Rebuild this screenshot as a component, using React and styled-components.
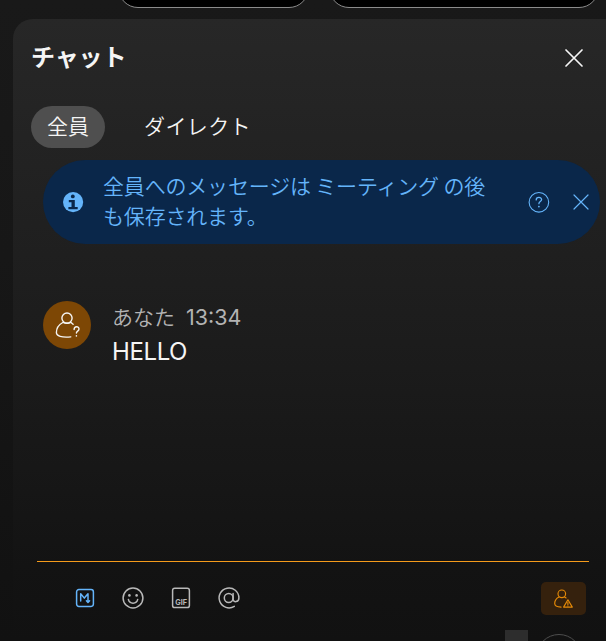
import React from 'react';
import styled, { createGlobalStyle } from 'styled-components';

const GlobalStyle = createGlobalStyle`
  * { box-sizing: border-box; }
  html, body { margin: 0; background: #141414; overflow: hidden; }
  button { appearance: none; border: 0; padding: 0; background: none; font: inherit; color: inherit; }
`;

const Screen = styled.main`
  position: relative;
  display: flex;
  flex-direction: column;
  width: 606px;
  height: 641px;
  overflow: hidden;
  background: linear-gradient(#191919, #171717 40%, #111111);
  font-family: Inter, 'Noto Sans CJK JP', sans-serif;
  color: #f5f5f5;
`;

const TopStrip = styled.div`
  display: flex;
  flex: 0 0 19px;
  align-items: flex-start;
  gap: 20px;
  padding-left: 118px;
`;

const TopPill = styled.div`
  flex: 0 0 ${({ $width }) => $width}px;
  height: 40px;
  margin-top: -32px;
  border: 1px solid #8b8b8b;
  border-radius: 20px;
  background: #000;
`;

const Panel = styled.section`
  display: flex;
  flex-direction: column;
  flex: 1;
  margin-left: 13px;
  border-radius: 20px 0 0 0;
  background: linear-gradient(#272727, #1c1c1c 52%, #131313 88%, #111111);
`;

const Header = styled.header`
  display: flex;
  align-items: center;
  justify-content: space-between;
  height: 78px;
  padding: 0 22px 0 18px;
`;

const Title = styled.h1`
  margin: -5px 0 0;
  font: 700 24px/32px 'Noto Sans CJK JP', sans-serif;
  letter-spacing: -0.1px;
`;

const IconButton = styled.button`
  display: grid;
  place-items: center;
  flex: 0 0 ${({ $size = 20 }) => $size}px;
  height: ${({ $size = 20 }) => $size}px;
  color: ${({ $color = '#f5f5f5' }) => $color};
`;

const Tabs = styled.nav`
  display: flex;
  margin-top: 9px;
  padding-left: 18px;
  gap: 22px;
`;

const Tab = styled.button`
  height: 42px;
  padding: 0 ${({ $active }) => ($active ? 0 : 17)}px 4px;
  width: ${({ $active }) => ($active ? '74px' : 'auto')};
  border-radius: 21px;
  background: ${({ $active }) => ($active ? '#4f4f4f' : 'transparent')};
  font: 350 21px/38px 'Noto Sans CJK JP', sans-serif;
  letter-spacing: ${({ $active }) => ($active ? 0 : 0.4)}px;
`;

const Banner = styled.aside`
  display: flex;
  align-items: center;
  height: 84px;
  margin: 12px 6px 0 30px;
  padding: 0 8px 0 20px;
  border-radius: 42px;
  background: #0a274a;
  color: #64b4fa;
`;

const BannerText = styled.p`
  width: 405px;
  margin: -4px 20px 0 19px;
  font: 350 21px/30px 'Noto Sans CJK JP', sans-serif;
  letter-spacing: -0.18px;
  white-space: nowrap;
`;

const BannerActions = styled.div`
  display: flex;
  gap: 21px;
`;

const Message = styled.article`
  display: flex;
  margin: 57px 0 0 30px;
  gap: 21px;
`;

const Avatar = styled.div`
  display: grid;
  place-items: center;
  width: 48px;
  height: 48px;
  padding-left: 1px;
  border-radius: 50%;
  background: #7d4705;
`;

const MessageMeta = styled.div`
  display: flex;
  gap: 11px;
  height: 33px;
  color: #b3b3b3;
  font-size: 21px;
  line-height: 33px;
`;

const Sender = styled.span`
  margin-top: -1px;
  font-family: 'Noto Sans CJK JP', sans-serif;
  font-weight: 350;
`;

const Time = styled.time`
  font-size: 21.5px;
  font-weight: 400;
`;

const MessageBody = styled.p`
  margin: 2px 0 0;
  font-size: 24px;
  line-height: 32px;
  letter-spacing: -0.4px;
`;

const Composer = styled.footer`
  display: flex;
  align-items: center;
  height: 75px;
  margin: auto 17px 5px 24px;
  padding: 0 3px 2px 37px;
  border-top: 1px solid #f59b1b;
`;

const Tools = styled.div`
  display: flex;
  flex: 1;
  gap: 26px;
`;

const GuestButton = styled.button`
  display: grid;
  place-items: center;
  width: 45px;
  height: 33px;
  border-radius: 5px;
  background: #35210d;
  color: #e58a08;
`;

const BottomSquare = styled.div`
  position: absolute;
  left: 505px;
  top: 630px;
  width: 23px;
  height: 11px;
  background: #2d2d2d;
`;

const BottomCircle = styled.div`
  position: absolute;
  left: 536px;
  top: 634px;
  width: 46px;
  height: 46px;
  border: 1px solid #4d4d4d;
  border-radius: 50%;
`;

const Icon = styled.svg`
  display: block;
  flex: none;
  overflow: visible;
  fill: none;
  stroke: currentColor;
  stroke-width: ${({ $stroke = 1.5 }) => $stroke};
  stroke-linecap: round;
  stroke-linejoin: round;
`;

const IconText = styled.text`
  fill: currentColor;
  stroke: none;
  font-family: Inter, sans-serif;
  font-size: ${({ $size }) => $size}px;
  font-weight: ${({ $weight = 500 }) => $weight};
  text-anchor: middle;
`;

function Close({ size, stroke }) {
  return (
    <Icon width={size} height={size} viewBox={`0 0 ${size} ${size}`} $stroke={stroke}>
      <path d={`M1 1L${size - 1} ${size - 1}M${size - 1} 1L1 ${size - 1}`} />
    </Icon>
  );
}

function InfoIcon() {
  return (
    <Icon width="21" height="21" viewBox="0 0 21 21">
      <circle cx="10.1" cy="10.1" r="10.1" fill="currentColor" stroke="none" />
      <circle cx="9.8" cy="4.4" r="1.9" fill="#0a274a" stroke="none" />
      <path d="M5.8 7.9h6v7.2h2.9v2.2H5.4v-2.2h3.1v-4.9H5.8z" fill="#0a274a" stroke="none" />
    </Icon>
  );
}

function GuestIcon() {
  return (
    <Icon width="26" height="28" viewBox="0 0 26 28" $stroke={1.4}>
      <circle cx="12" cy="7.1" r="5.1" />
      <path d="M7.8 11.5C3.8 13.7 1.4 17.4 1.4 21.6c0 3.6 5.2 5.1 14.4 4.3M8.2 11.3c2.3 1.2 5.3 1.2 7.5 0l2.4 1.9" />
      <path d="M19.1 18.5c.1-3.8 4.9-3.4 4.9-.6 0 2.3-2.6 2.1-2.6 4.2" />
      <circle cx="21.4" cy="24.9" r=".8" fill="currentColor" stroke="none" />
    </Icon>
  );
}

export default function App() {
  return (
    <Screen>
      <GlobalStyle />
      <TopStrip>
        <TopPill $width={191} />
        <TopPill $width={270} />
      </TopStrip>
      <Panel>
        <Header>
          <Title>チャット</Title>
          <IconButton aria-label="閉じる"><Close size={18} stroke={1.7} /></IconButton>
        </Header>
        <Tabs>
          <Tab $active>全員</Tab>
          <Tab>ダイレクト</Tab>
        </Tabs>
        <Banner>
          <InfoIcon />
          <BannerText>全員へのメッセージは ミーティング の後<br />も保存されます。</BannerText>
          <BannerActions>
            <IconButton $size={21} $color="#64b4fa" aria-label="ヘルプ">
              <Icon width="21" height="21" viewBox="0 0 21 21" $stroke={1.1}>
                <circle cx="10.9" cy="10.3" r="9.8" />
                <path d="M8.2 7.9c0-3.4 5.4-3.3 5.4-.3 0 2-2.7 2-2.7 4.1" strokeWidth="1.3" />
                <circle cx="10.9" cy="14.6" r=".9" fill="currentColor" stroke="none" />
              </Icon>
            </IconButton>
            <IconButton $size={21} $color="#64b4fa" aria-label="通知を閉じる"><Close size={16} stroke={1.2} /></IconButton>
          </BannerActions>
        </Banner>
        <Message>
          <Avatar><GuestIcon /></Avatar>
          <div>
            <MessageMeta><Sender>あなた</Sender><Time>13:34</Time></MessageMeta>
            <MessageBody>HELLO</MessageBody>
          </div>
        </Message>
        <Composer>
          <Tools>
            <IconButton $size={22} $color="#64b4fa" aria-label="Markdown">
              <Icon width="22" height="22" viewBox="0 0 22 22" $stroke={1.5}>
                <rect x="2.6" y="2.6" width="16.8" height="16.8" rx="2.3" />
                <path d="M6.7 14V6.7l3.6 4.4 3.7-4.4v8.6M12.4 13.7l1.6 1.8 1.6-1.8" />
              </Icon>
            </IconButton>
            <IconButton $size={22} $color="#b9b9b9" aria-label="絵文字">
              <Icon width="22" height="22" viewBox="0 0 22 22">
                <circle cx="11" cy="11" r="9.9" />
                <path d="M6.4 12.4c1.1 5 8.2 5 9.3 0" />
                <circle cx="7.4" cy="8.4" r="1.3" fill="currentColor" stroke="none" />
                <circle cx="14.6" cy="8.4" r="1.3" fill="currentColor" stroke="none" />
              </Icon>
            </IconButton>
            <IconButton $size={22} $color="#b9b9b9" aria-label="GIF">
              <Icon width="22" height="22" viewBox="0 0 22 22">
                <rect x="2.6" y="1.2" width="16.8" height="19.4" rx="2.2" />
                <IconText x="11.2" y="17.9" $size={7.3} $weight={700}>GIF</IconText>
              </Icon>
            </IconButton>
            <IconButton $size={22} $color="#b9b9b9" aria-label="メンション">
              <Icon width="22" height="22" viewBox="0 0 22 22">
                <circle cx="10.7" cy="11" r="4.4" />
                <path d="M15.1 6.6v5.7c0 3.4 5.8 3.2 5.8-1.4A9.9 9.9 0 1 0 16.3 19.3" />
              </Icon>
            </IconButton>
          </Tools>
          <GuestButton aria-label="ゲスト">
            <Icon width="19" height="19" viewBox="0 0 19 19" $stroke={1.15}>
              <circle cx="7.8" cy="4.8" r="3.8" />
              <path d="M5 8C2.3 9.3.7 11.7.7 14.6c0 2.2 2.3 3.5 6.4 3.5M10.6 8l1.5 1M13.9 10.8l4.4 7.3H9.6z" />
              <path d="M13.9 13.4v2M13.9 16.8v.1" />
            </Icon>
          </GuestButton>
        </Composer>
      </Panel>
      <BottomSquare />
      <BottomCircle />
    </Screen>
  );
}
